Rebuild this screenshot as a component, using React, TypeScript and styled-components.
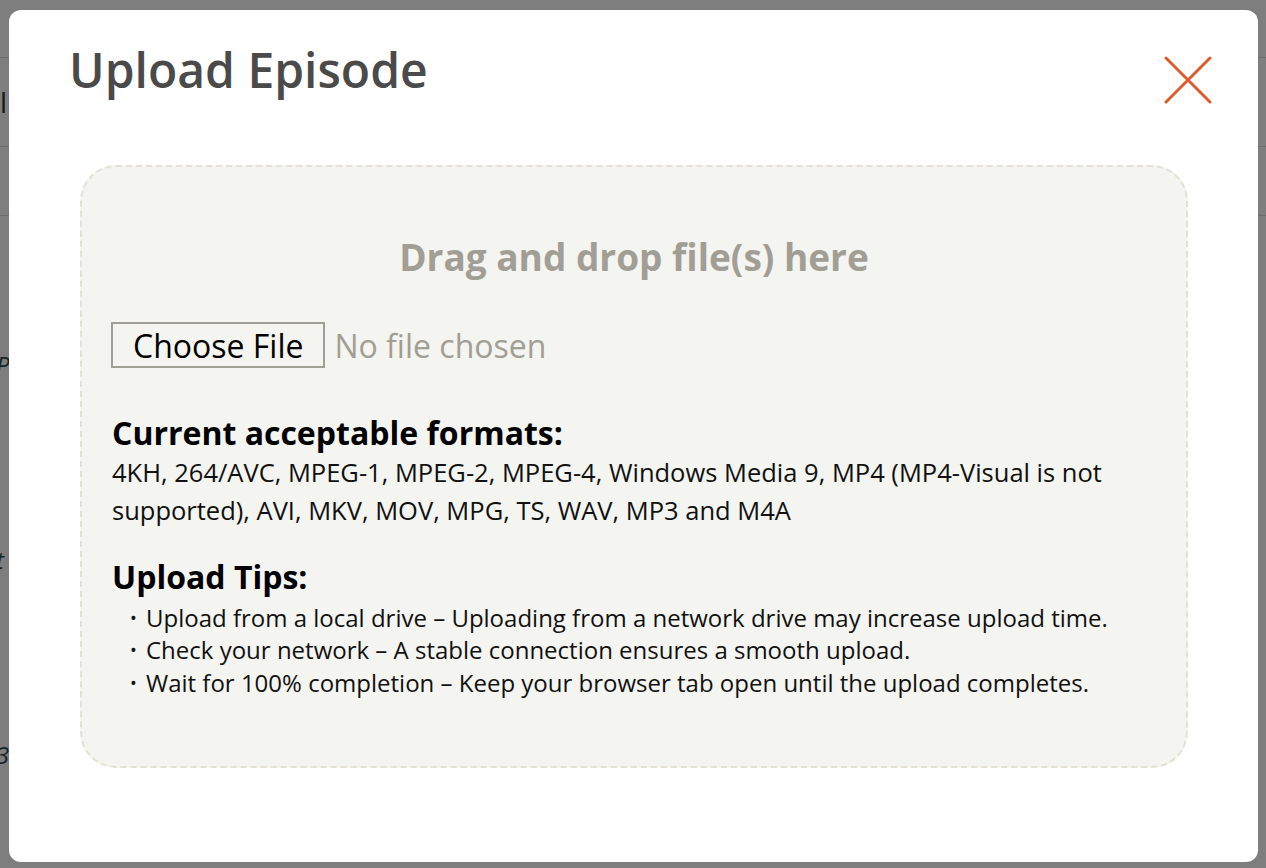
import React from "react";
import styled, { createGlobalStyle } from "styled-components";

const GlobalStyle = createGlobalStyle`
  html, body {
    margin: 0;
    padding: 0;
    height: 100%;
    overflow: hidden;
  }
  body {
    font-family: "Open Sans", "Noto Sans", sans-serif;
    background: #ffffff;
  }
`;

// page behind the dialog, mostly hidden
const Page = styled.div`
  height: 100vh;
  background: #fdfdfd;
`;

const PageRow = styled.div<{ $h: number }>`
  height: ${(p) => p.$h}px;
  border-bottom: 1px solid #d6d6d6;
  display: flex;
  align-items: center;
  font-size: 28px;
  color: #333;
`;

const PageBody = styled.div`
  display: flex;
  flex-direction: column;
  gap: 162px;
  padding: 132px 0 0;
  margin-left: -4px;
  font-size: 24px;
  font-style: italic;
  color: #2f4a52;
`;

const Overlay = styled.div`
  position: fixed;
  inset: 0;
  background: rgba(0, 0, 0, 0.5);
  display: flex;
  padding: 10px 8px 6px 9px;
`;

const Modal = styled.div`
  flex: 1;
  background: #ffffff;
  border-radius: 12px;
  display: flex;
  flex-direction: column;
  padding: 0 70px 0 61px;
`;

const Header = styled.div`
  display: flex;
  align-items: flex-start;
  justify-content: space-between;
  height: 155px;
`;

const Title = styled.h1`
  margin: 29px 0 0 -1px;
  font-size: 48px;
  font-weight: 600;
  color: #4a4a4a;
  line-height: 1.3;
`;

const CloseButton = styled.button`
  margin: 46px -24px 0 0;
  border: 0;
  background: none;
  padding: 0;
  width: 48px;
  height: 48px;
  cursor: pointer;
  display: flex;
`;

const DropZone = styled.div`
  margin-left: 10px;
  height: 603px;
  box-sizing: border-box;
  border: 2px dashed #e4e1d3;
  border-radius: 36px;
  background: #f4f4f0;
  padding: 68px 30px 0;
  display: flex;
  flex-direction: column;
`;

const DropText = styled.div`
  text-align: center;
  font-size: 37px;
  font-weight: 700;
  color: #a19e95;
  line-height: 1.2;
`;

const FileRow = styled.div`
  margin: 43px 0 0 -1px;
  display: flex;
  align-items: center;
  gap: 9px;
`;

const ChooseButton = styled.label`
  box-sizing: border-box;
  height: 46px;
  padding: 0 20px;
  border: 2px solid #a19e95;
  background: #f4f4f0;
  display: flex;
  align-items: center;
  font-size: 32px;
  color: #000;
  cursor: pointer;
`;

const NoFile = styled.span`
  font-size: 32px;
  color: #a19e95;
`;

const SectionTitle = styled.h3<{ $top: number }>`
  margin: ${(p) => p.$top}px 0 0;
  font-size: 32px;
  font-weight: 700;
  color: #000;
  line-height: 1.2;
`;

const Formats = styled.p`
  margin: 0;
  font-size: 25.5px;
  line-height: 38px;
  color: #111;
`;

const TipList = styled.ul`
  margin: 5.5px 0 0;
  padding: 0 0 0 18px;
  list-style: none;
`;

const Tip = styled.li`
  font-size: 24px;
  line-height: 32.5px;
  color: #111;
  display: flex;
  gap: 7px;
  &::before {
    content: "•";
    font-size: 18px;
    width: 9px;
  }
`;

const tips = [
  "Upload from a local drive – Uploading from a network drive may increase upload time.",
  "Check your network – A stable connection ensures a smooth upload.",
  "Wait for 100% completion – Keep your browser tab open until the upload completes.",
];

export default function App() {
  return (
    <>
      <GlobalStyle />
      <Page>
        <PageRow $h={57} />
        <PageRow $h={88}>l</PageRow>
        <PageRow $h={68} />
        <PageBody>
          <span>Po</span>
          <span>t</span>
          <span>3</span>
        </PageBody>
      </Page>
      <Overlay>
        <Modal>
          <Header>
            <Title>Upload Episode</Title>
            <CloseButton aria-label="Close">
              <svg width="48" height="48" viewBox="0 0 48 48">
                <path
                  d="M2 2 L46 46 M46 2 L2 46"
                  stroke="#e05a2e"
                  strokeWidth="3"
                  strokeLinecap="round"
                  fill="none"
                />
              </svg>
            </CloseButton>
          </Header>
          <DropZone>
            <DropText>Drag and drop file(s) here</DropText>
            <FileRow>
              <ChooseButton>Choose File</ChooseButton>
              <NoFile>No file chosen</NoFile>
            </FileRow>
            <SectionTitle $top={46}>Current acceptable formats:</SectionTitle>
            <Formats>
              4KH, 264/AVC, MPEG-1, MPEG-2, MPEG-4, Windows Media 9, MP4 (MP4-Visual is not
              supported), AVI, MKV, MOV, MPG, TS, WAV, MP3 and M4A
            </Formats>
            <SectionTitle $top={29}>Upload Tips:</SectionTitle>
            <TipList>
              {tips.map((t) => (
                <Tip key={t}>{t}</Tip>
              ))}
            </TipList>
          </DropZone>
        </Modal>
      </Overlay>
    </>
  );
}
